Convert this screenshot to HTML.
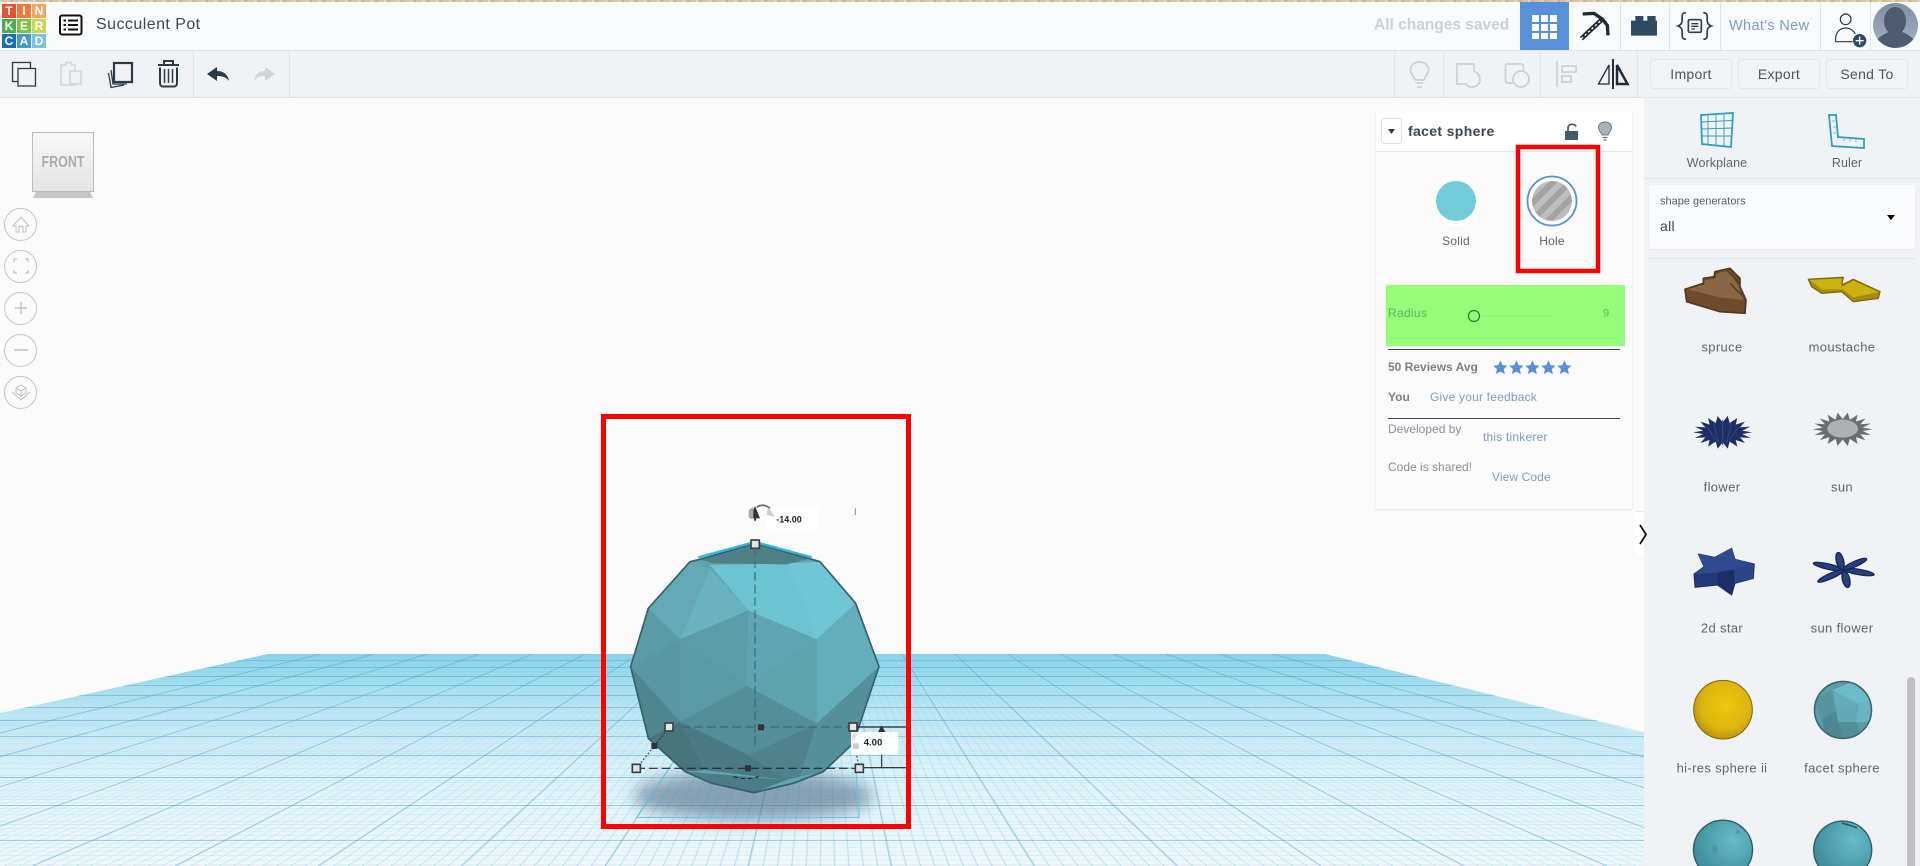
<!DOCTYPE html>
<html lang="en"><head><meta charset="utf-8"><title>Succulent Pot</title>
<style>
html,body{margin:0;padding:0;width:1920px;height:866px;overflow:hidden;background:#fbfbfb;font-family:"Liberation Sans",sans-serif}
#page{position:relative;width:1920px;height:866px;overflow:hidden}
.a{position:absolute}
.t{position:absolute;white-space:nowrap;line-height:1;transform:translateY(-50%)}
.c{position:absolute;white-space:nowrap;line-height:1;transform:translate(-50%,-50%)}
svg{position:absolute;left:0;top:0;overflow:hidden}
.btn{position:absolute;top:59px;height:30px;width:82px;box-sizing:border-box;border:1px solid #e4e6e9;border-radius:3px;background:#f2f3f5;font-size:14px;color:#4a5561;text-align:center;line-height:29px;letter-spacing:.3px}
.v{position:absolute;width:1px;background:#e2e4e8}
.round{position:absolute;left:4px;width:33px;height:33px;border:1px solid #c4c6c9;border-radius:50%;box-sizing:border-box;background:#fbfbfb}
.lbl{font-size:13px;color:#5b6570;letter-spacing:.35px}
.lnk{color:#7d9cc9}
.gry{color:#8a8f96}
</style></head><body><div id="page">

<!-- viewport with grid -->
<div class="a" style="left:0;top:0;width:1644px;height:866px;overflow:hidden;background:#fbfbfb">
  <div class="a" style="left:0;top:0;width:4000px;height:2528px;transform-origin:0 0;transform:matrix3d(.26425,0,0,0, -.2058,-.1322,0,-.0002495, 0,0,1,0, 268,654,0,1);background-color:#eef8fb;background-image:linear-gradient(to right,#c0e5f1 2px,transparent 2px),linear-gradient(to bottom,#c0e5f1 2px,transparent 2px);background-size:20px 20px,20px 20px"></div>
  <svg width="1644" height="866">
    <defs><linearGradient id="gf" x1="0" y1="654" x2="0" y2="866" gradientUnits="userSpaceOnUse">
      <stop offset="0" stop-color="#77cbe8" stop-opacity=".85"/><stop offset=".3" stop-color="#8ad4ec" stop-opacity=".45"/><stop offset=".65" stop-color="#b0e2f2" stop-opacity=".18"/><stop offset="1" stop-color="#d0eef7" stop-opacity="0"/></linearGradient>
      <clipPath id="gc"><polygon points="268,654 1325,654 1644,732 1644,866 0,866 0,713"/></clipPath></defs>
    <polygon points="268,654 1325,654 1644,732 1644,866 0,866 0,713" fill="url(#gf)"/>
    <g clip-path="url(#gc)" stroke="#4f9bb8" stroke-opacity=".42" stroke-width="1" fill="none">
      <path d="M0 660.500H1644M0 667.500H1644M0 676.500H1644M0 685.500H1644M0 695.500H1644M0 707.500H1644M0 720.500H1644M0 736.500H1644M0 755.500H1644M0 777.500H1644M0 805.500H1644M0 840.500H1644"/>
      <path d="M321 654L-541 866M374 654L-398 866M427 654L-255 866M479 654L-111 866M532 654L32 866M585 654L175 866M638 654L318 866M691 654L461 866M744 654L605 866M797 654L748 866M849 654L891 866M902 654L1034 866M955 654L1177 866M1008 654L1321 866M1061 654L1464 866M1114 654L1607 866M1166 654L1750 866M1219 654L1893 866M1272 654L2037 866"/>
    </g>
  </svg>
</div>

<!-- 3D object (crop coords) -->
<svg width="1920" height="866">
 <defs>
  <filter id="bl" x="-30%" y="-80%" width="160%" height="260%"><feGaussianBlur stdDeviation="24"/></filter>
  <clipPath id="sph"><polygon points="330,478 300,485 175,625 122,800 175,1015 285,1115 365,1150 492,1178 610,1150 700,1115 790,1030 867,800 797,610 690,485 655,475 495,430"/></clipPath>
 </defs>
 <g transform="translate(590 400) scale(.33333)">
  <ellipse cx="490" cy="1188" rx="360" ry="76" fill="#4f6f8a" opacity=".62" filter="url(#bl)"/>
  <polygon points="250,1085 140,1252 808,1252 797,1105" fill="none" stroke="#62c1e0" stroke-width="3"/>
  <g clip-path="url(#sph)">
   <rect x="100" y="420" width="800" height="780" fill="#5fa4b0"/>
   <polygon fill="#64a9b5" points="300,485 175,625 270,718 360,505"/>
   <polygon fill="#68b3bf" points="360,505 270,718 475,632"/>
   <polygon fill="#6cc3d2" points="360,495 475,632 680,718 797,610 590,490"/>
   <polygon fill="#6fc6d4" points="590,490 690,485 797,610 680,718 640,600"/>
   <polygon fill="#5a9ca8" points="270,718 475,632 470,858"/>
   <polygon fill="#5ea5b1" points="475,632 680,718 470,858"/>
   <polygon fill="#62aeba" points="680,718 797,610 867,800 680,970"/>
   <polygon fill="#5b9ba6" points="175,625 270,718 122,800"/>
   <polygon fill="#5896a1" points="122,800 270,718 270,965"/>
   <polygon fill="#5a9aa5" points="470,858 270,718 270,965"/>
   <polygon fill="#5da2ad" points="470,858 680,718 680,970"/>
   <polygon fill="#548e99" points="270,965 470,858 680,970 475,1065"/>
   <polygon fill="#4f858f" points="122,800 270,965 175,1015"/>
   <polygon fill="#47757e" points="175,1015 270,965 345,1110 285,1115"/>
   <polygon fill="#4a7a84" points="270,965 475,1065 590,1140 345,1110"/>
   <polygon fill="#4f828c" points="475,1065 680,970 630,1130 590,1140"/>
   <polygon fill="#558f9a" points="680,970 867,800 790,1030 700,1115 630,1130"/>
   <polygon fill="#4b7d86" points="285,1115 590,1140 492,1178 365,1150"/>
   <polygon fill="#4f7f87" points="330,478 495,432 660,475 590,493 370,490"/>
  </g>
  <polygon points="330,478 300,485 175,625 122,800 175,1015 285,1115 365,1150 492,1178 610,1150 700,1115 790,1030 867,800 797,610 690,485 655,475 495,430" fill="none" stroke="#35606c" stroke-width="5" stroke-linejoin="round"/>
  <polyline points="325,472 495,426 665,472" fill="none" stroke="#2fb6da" stroke-width="7"/>
  <!-- selection -->
  <line x1="495" y1="440" x2="495" y2="1040" stroke="#3b6b75" stroke-width="3.500" stroke-dasharray="26 12"/>
  <line x1="237" y1="981" x2="789" y2="981" stroke="#3b6b75" stroke-width="3.500" stroke-dasharray="26 12"/>
  <line x1="139" y1="1105" x2="808" y2="1105" stroke="#1c2a30" stroke-width="3.500" stroke-dasharray="26 12"/>
  <polyline points="139,1105 193,1038 237,981" fill="none" stroke="#1c2a30" stroke-width="3" stroke-dasharray="5 6"/>
  <polyline points="808,1105 795,1040 789,981" fill="none" stroke="#1c2a30" stroke-width="3" stroke-dasharray="5 6"/>
  <path d="M430 1130 Q468 1142 506 1130" fill="none" stroke="#1c2a30" stroke-width="3" stroke-dasharray="14 8"/>
  <line x1="800" y1="981" x2="948" y2="981" stroke="#222" stroke-width="3.500"/>
  <line x1="820" y1="1103" x2="948" y2="1103" stroke="#222" stroke-width="3.500"/>
  <line x1="875" y1="995" x2="875" y2="1103" stroke="#333" stroke-width="3.500"/>
  <polygon points="864,996 886,996 875,976" fill="#333"/>
  <rect x="783" y="996" width="142" height="68" fill="#fff" opacity=".93"/>
  <rect x="789" y="1030" width="17" height="17" fill="#ccc"/>
  <polygon points="787,1000 805,1000 787,1025" fill="#ddd"/>
  <rect x="525" y="322" width="160" height="70" fill="#fff"/>
  <line x1="796" y1="325" x2="796" y2="345" stroke="#888" stroke-width="3"/>
  <polygon points="495,318 510,355 480,355" fill="#333"/>
  <rect x="492" y="350" width="6" height="12" fill="#333"/>
  <path d="M500 322 Q520 308 540 325" fill="none" stroke="#666" stroke-width="5"/>
  <polygon points="534,322 555,350 530,345" fill="#ccc"/>
  <polygon points="476,330 490,320 490,355 476,352" fill="#aaa"/>
  <g fill="#e4e4e4" stroke="#3c3f42" stroke-width="5">
   <rect x="483" y="420" width="25" height="25"/><rect x="225" y="969" width="24" height="24"/><rect x="777" y="969" width="24" height="24"/><rect x="127" y="1093" width="24" height="24"/><rect x="796" y="1093" width="24" height="24"/>
  </g>
  <g fill="#333"><rect x="504" y="973" width="18" height="18"/><rect x="465" y="1096" width="18" height="18"/><rect x="184" y="1029" width="18" height="18"/></g>
 </g>
</svg>
<span class="c" style="left:789px;top:519.500px;font-size:9px;font-weight:bold;color:#222">-14.00</span>
<span class="c" style="left:873px;top:743px;font-size:9.500px;font-weight:bold;color:#222">4.00</span>
<!-- red rectangle -->
<div class="a" style="left:601px;top:414px;width:310px;height:415px;box-sizing:border-box;border:5px solid #fe0000"></div>

<!-- view cube -->
<div class="a" style="left:32px;top:132px;width:62px;height:60px;box-sizing:border-box;border:1px solid #b9bbbd;background:linear-gradient(#f8f8f8,#e4e4e4)"></div>
<div class="a" style="left:33px;top:192px;width:60px;height:6px;background:#c6c6c6;clip-path:polygon(3px 0,57px 0,100% 100%,0 100%)"></div>
<span class="c" style="left:63px;top:163px;font-size:16px;font-weight:bold;color:#a8acb2;transform:translate(-50%,-50%) scaleX(.78)">FRONT</span>
<div class="round" style="top:208px"></div><div class="round" style="top:250px"></div><div class="round" style="top:292px"></div><div class="round" style="top:334px"></div><div class="round" style="top:376px"></div>
<svg width="60" height="420" fill="none" stroke="#bcbfc3" stroke-width="1">
 <path d="M13 226 L21 217 L29 226 L26 226 L26 232 L23 232 L23 226.500 L19 226.500 L19 232 L16 232 L16 226 Z"/>
 <path d="M14 262V259H17M25 259H28V262M14 270V273H17M25 273H28V270" stroke-width="1.200"/>
 <path d="M21 302V314M15 308H27" stroke-width="1.400"/>
 <path d="M14 350H28" stroke-width="1.400"/>
 <path d="M21 385L26 388V393L21 396L16 393V388ZM16 388L21 391L26 388M21 391V396M12 392L21 400L30 392"/>
</svg>

<!-- header -->
<div class="a" style="left:0;top:2px;width:1920px;height:48px;background:#f9fafb;border-bottom:1px solid #e2e4e7;box-sizing:content-box"></div>
<div class="a" style="left:0;top:0;width:1920px;height:2px;background:repeating-linear-gradient(90deg,#d9c3a0 0,#d9c3a0 7px,#e8dcc8 7px,#c7a97e 13px)"></div>
<!-- logo -->
<div class="a" style="left:2px;top:4px;width:44px;height:44px;display:grid;grid-template-columns:repeat(3,14px);grid-template-rows:repeat(3,14px);gap:1px;font:bold 12px/14px 'Liberation Sans',sans-serif;color:#fff;text-align:center">
<span style="background:#e8502f">T</span><span style="background:#f07a3a">I</span><span style="background:#f5a45f">N</span>
<span style="background:#4cac52">K</span><span style="background:#7fc241">E</span><span style="background:#c5d84f">R</span>
<span style="background:#1a6eb5">C</span><span style="background:#3f9bd1">A</span><span style="background:#7cc0e3">D</span></div>
<svg width="1920" height="100">
 <rect x="60" y="15.500" width="21.500" height="19" rx="2" fill="#fff" stroke="#111" stroke-width="2"/>
 <path d="M63.500 20.500h2.500M63.500 25h2.500M63.500 29.500h2.500M68 20.500h10M68 25h10M68 29.500h10" stroke="#111" stroke-width="2"/>
</svg>
<span class="t" style="left:96px;top:25px;font-size:16px;color:#3d4854;letter-spacing:.45px">Succulent Pot</span>
<span class="t" style="left:1374px;top:24.500px;font-size:15.500px;font-weight:bold;color:#cbd0d7">All changes saved</span>
<div class="a" style="left:1520px;top:2px;width:49px;height:48px;background:#5891d9"></div>
<svg width="1920" height="100">
 <g fill="#fff"><rect x="1532" y="15" width="7" height="7"/><rect x="1541" y="15" width="7" height="7"/><rect x="1550" y="15" width="7" height="7"/><rect x="1532" y="24" width="7" height="7"/><rect x="1541" y="24" width="7" height="7"/><rect x="1550" y="24" width="7" height="7"/><rect x="1532" y="33" width="7" height="6"/><rect x="1541" y="33" width="7" height="6"/><rect x="1550" y="33" width="7" height="6"/></g>
 <g transform="translate(1560 0) scale(.33333)">
  <path d="M68 42 L102 40 L128 58 L142 76 L144 106" fill="none" stroke="#1e2a35" stroke-width="10"/>
  <path d="M64 116 L124 60" stroke="#1e2a35" stroke-width="14" fill="none"/>
  <path d="M64 116 L124 60" stroke="#fff" stroke-width="4" stroke-dasharray="7 7" fill="none"/>
  <path d="M213 107V62H226V48H250V62H262V48H287V62H291V107Z" fill="#2f4a63"/>
  <path d="M378 38C362 38 368 50 366 65C365 72 360 76 354 78C360 80 365 84 366 90C368 105 362 118 378 118M430 38C446 38 440 50 442 65C443 72 448 76 454 78C448 80 443 84 442 90C440 105 446 118 430 118" fill="none" stroke="#2d3e50" stroke-width="5"/>
  <rect x="385" y="59" width="39" height="38" rx="4" fill="none" stroke="#2d3e50" stroke-width="5"/>
  <path d="M394 71H415M394 79H415M394 87H405" stroke="#2d3e50" stroke-width="4"/>
  <circle cx="857" cy="58" r="16" fill="none" stroke="#2d3640" stroke-width="3.500"/>
  <path d="M827 125C825 95 840 84 858 84C868 84 880 90 886 102M827 125H878" fill="none" stroke="#2d3640" stroke-width="3.500"/>
  <circle cx="899" cy="122" r="20" fill="#2f4a63"/><path d="M899 110V134M887 122H911" stroke="#fff" stroke-width="4"/>
 </g>
 <defs><clipPath id="av"><ellipse cx="1895.500" cy="25.500" rx="22.500" ry="22.500"/></clipPath>
 <linearGradient id="avg" x1="0" y1="0" x2="0" y2="1"><stop offset="0" stop-color="#7f8fa3"/><stop offset="1" stop-color="#a3b1c3"/></linearGradient></defs>
 <g clip-path="url(#av)"><rect x="1873" y="3" width="45" height="45" fill="url(#avg)"/>
  <ellipse cx="1895" cy="21" rx="11" ry="14" fill="#4d5c70"/><path d="M1873 48C1876 36 1886 34 1890 31H1901C1905 34 1915 36 1918 48Z" fill="#4d5c70"/></g>
</svg>
<div class="v" style="left:1620px;top:2px;height:48px"></div><div class="v" style="left:1669px;top:2px;height:48px"></div><div class="v" style="left:1720px;top:2px;height:48px"></div><div class="v" style="left:1820px;top:2px;height:48px"></div><div class="v" style="left:1870px;top:2px;height:48px"></div>
<span class="t" style="left:1729px;top:26px;font-size:14.500px;color:#7d9cc9;letter-spacing:.35px">What's New</span>

<!-- toolbar -->
<div class="a" style="left:0;top:51px;width:1920px;height:47px;background:#f1f2f5;border-bottom:1px solid #e4e5e8;box-sizing:border-box"></div>
<div class="v" style="left:193px;top:51px;height:47px"></div><div class="v" style="left:289px;top:51px;height:47px"></div>
<div class="v" style="left:1394px;top:51px;height:47px"></div><div class="v" style="left:1443px;top:51px;height:47px"></div><div class="v" style="left:1540px;top:51px;height:47px"></div><div class="v" style="left:1637px;top:51px;height:47px"></div>
<div class="btn" style="left:1650px">Import</div><div class="btn" style="left:1738px">Export</div><div class="btn" style="left:1826px">Send To</div>
<svg width="1920" height="100">
 <!-- copy -->
 <rect x="12.500" y="62.500" width="18" height="19" fill="none" stroke="#2c3a46" stroke-width="1.300"/>
 <rect x="18" y="68.500" width="17.500" height="17.500" fill="#f1f2f5" stroke="#2c3a46" stroke-width="1.300"/>
 <!-- paste -->
 <path d="M61 65H66V62.500H71V65H75V85H61Z" fill="none" stroke="#ced5dd" stroke-width="1.500"/>
 <rect x="70" y="71" width="11" height="13" fill="#f1f2f5" stroke="#ced5dd" stroke-width="1.500"/>
 <!-- duplicate -->
 <path d="M108.500 73L111 87.500L124 85" fill="none" stroke="#2c3a46" stroke-width="1.300"/>
 <path d="M111 70L113 84L127 84" fill="none" stroke="#2c3a46" stroke-width="1.300"/>
 <rect x="114" y="63" width="18" height="19" fill="#f1f2f5" stroke="#2c3a46" stroke-width="2.200"/>
 <!-- trash -->
 <path d="M158 65H179M164 64.500V61H173V64.500" fill="none" stroke="#2c3a46" stroke-width="2"/>
 <path d="M160 67.500V83C160 85.500 161.500 86.500 163 86.500H174C175.500 86.500 177 85.500 177 83V67.500" fill="none" stroke="#2c3a46" stroke-width="2"/>
 <path d="M164.500 69V83M168.500 69V83M172.500 69V83" stroke="#2c3a46" stroke-width="1.500"/>
 <!-- undo / redo -->
 <path d="M207 74L217 67V71C224 71 228 75 229 81C226 77 222 76 217 76V81Z" fill="#2c3a46"/>
 <path d="M275 74L265 67V71C258 71 255 75 254 81C257 77 260 76 265 76V81Z" fill="#cfd6de"/>
 <!-- bulb -->
 <path d="M1415 80C1414 76 1410.500 74 1410.500 70C1410.500 65 1414.500 62 1419.500 62C1424.500 62 1428.500 65 1428.500 70C1428.500 74 1425 76 1424 80ZM1415.500 83H1423.500M1417 87H1422" fill="none" stroke="#ccd2d9" stroke-width="1.800"/>
 <!-- shape -->
 <path d="M1457 64H1474V71C1478 73 1480 76 1480 80C1480 84 1476 87 1472 87C1469 87 1467 86 1466 84H1457Z" fill="none" stroke="#ccd2d9" stroke-width="1.800"/>
 <rect x="1505.500" y="64" width="18" height="19" rx="2" fill="none" stroke="#ccd2d9" stroke-width="1.800"/>
 <circle cx="1521" cy="79" r="8" fill="#f1f2f5" stroke="#ccd2d9" stroke-width="1.800"/>
 <!-- align -->
 <path d="M1557 61V87" stroke="#ccd2d9" stroke-width="1.800"/>
 <rect x="1562" y="66" width="14" height="6" fill="none" stroke="#ccd2d9" stroke-width="1.800"/>
 <rect x="1562" y="76" width="9" height="6" fill="none" stroke="#ccd2d9" stroke-width="1.800"/>
 <!-- flip -->
 <path d="M1613 59V89" stroke="#222c36" stroke-width="2"/>
 <path d="M1609 65V84H1598.500Z" fill="none" stroke="#222c36" stroke-width="1.300"/>
 <path d="M1617 65V84H1627.500Z" fill="none" stroke="#222c36" stroke-width="2.500"/>
</svg>

<!-- inspector -->
<div class="a" style="left:1376px;top:111px;width:256px;height:398px;background:#fbfbfc;box-shadow:0 1px 2px rgba(0,0,0,.1)"></div>
<div class="a" style="left:1376px;top:111px;width:256px;height:40px;background:#fff;border-bottom:1px solid #e2e4e7"></div>
<div class="a" style="left:1381px;top:118px;width:21px;height:26px;box-sizing:border-box;border:1px solid #dfe1e5;border-radius:3px;background:#fff"></div>
<span class="t" style="left:1408px;top:131px;font-size:14px;font-weight:bold;color:#3a4654;letter-spacing:.35px">facet sphere</span>
<div class="a" style="left:1436px;top:181px;width:40px;height:40px;border-radius:50%;background:#72cbd9;box-shadow:0 0 0 5px #fff"></div>
<div class="a" style="left:1386px;top:285px;width:239px;height:61px;background:#94fd7a"></div>
<svg width="1920" height="500">
 <defs><pattern id="st" width="12" height="12" patternUnits="userSpaceOnUse" patternTransform="rotate(-45)"><rect width="12" height="12" fill="#bdbdbd"/><rect width="12" height="6" fill="#a3a3a3"/></pattern></defs>
 <polygon points="1388,129 1395,129 1391.500,134" fill="#333c46"/>
 <rect x="1565" y="131" width="13" height="9" fill="#47596b"/>
 <path d="M1568 131V127.500C1568 124 1574.500 123 1576 126.500" fill="none" stroke="#47596b" stroke-width="1.700"/>
 <path d="M1602 135C1601 132 1598.500 130.500 1598.500 127.500C1598.500 124 1601.500 122 1605 122C1608.500 122 1611.500 124 1611.500 127.500C1611.500 130.500 1609 132 1608 135Z" fill="#a9b2ba" stroke="#6a7681"/>
 <path d="M1602.500 137.500H1607.500M1603.500 140H1606.500" stroke="#6a7681" stroke-width="1.300"/>
 <circle cx="1552" cy="201" r="24.500" fill="#fff" stroke="#5c8fd0" stroke-width="1.800"/>
 <circle cx="1552" cy="201" r="20" fill="url(#st)"/>
 <rect x="1518" y="147" width="80" height="124" fill="none" stroke="#fe0000" stroke-width="4.500"/>
 <line x1="1482" y1="316" x2="1555" y2="316" stroke="#8cf472" stroke-width="1"/>
 <circle cx="1474" cy="316" r="5.500" fill="none" stroke="#2c7a30" stroke-width="1.200"/>
 <line x1="1388" y1="338" x2="1620" y2="338" stroke="#8cf472" stroke-width="1"/>
 <line x1="1388" y1="349.500" x2="1620" y2="349.500" stroke="#3f4a58"/>
 <line x1="1388" y1="418.500" x2="1620" y2="418.500" stroke="#3f4a58"/>
 <g fill="#5891d9" transform="translate(1493 360) scale(.92)"><path d="M8 .5L10.300 5.600L15.800 6.200L11.700 9.900L12.900 15.400L8 12.600L3.100 15.400L4.300 9.900L.2 6.200L5.700 5.600Z"/><path transform="translate(17.400 0)" d="M8 .5L10.300 5.600L15.800 6.200L11.700 9.900L12.900 15.400L8 12.600L3.100 15.400L4.300 9.900L.2 6.200L5.700 5.600Z"/><path transform="translate(34.800 0)" d="M8 .5L10.300 5.600L15.800 6.200L11.700 9.900L12.900 15.400L8 12.600L3.100 15.400L4.300 9.900L.2 6.200L5.700 5.600Z"/><path transform="translate(52.200 0)" d="M8 .5L10.300 5.600L15.800 6.200L11.700 9.900L12.900 15.400L8 12.600L3.100 15.400L4.300 9.900L.2 6.200L5.700 5.600Z"/><path transform="translate(69.600 0)" d="M8 .5L10.300 5.600L15.800 6.200L11.700 9.900L12.900 15.400L8 12.600L3.100 15.400L4.300 9.900L.2 6.200L5.700 5.600Z"/></g>
</svg>
<span class="c lbl" style="left:1456px;top:241px;font-size:12px;letter-spacing:.2px">Solid</span>
<span class="c lbl" style="left:1552px;top:241px;font-size:12px;letter-spacing:.2px">Hole</span>
<span class="t" style="left:1388px;top:313px;font-size:12px;color:#5cb84f;letter-spacing:.3px">Radius</span>
<span class="t" style="left:1603px;top:314px;font-size:11px;color:#5cb84f">9</span>
<span class="t" style="left:1388px;top:367px;font-size:12px;font-weight:bold;color:#7c8187">50 Reviews Avg</span>
<span class="t" style="left:1388px;top:397px;font-size:12px;font-weight:bold;color:#7c8187">You</span>
<span class="t lnk" style="left:1430px;top:397px;font-size:12px;letter-spacing:.2px">Give your feedback</span>
<span class="t gry" style="left:1388px;top:429px;font-size:12px">Developed by</span>
<span class="t lnk" style="left:1483px;top:437px;font-size:12px;letter-spacing:.2px">this tinkerer</span>
<span class="t gry" style="left:1388px;top:467px;font-size:12px">Code is shared!</span>
<span class="t lnk" style="left:1492px;top:477px;font-size:12px;letter-spacing:.1px">View Code</span>

<!-- toggle -->
<div class="a" style="left:1635px;top:511px;width:15px;height:46px;background:#fff;border-top:1px solid #e4e5e8;box-sizing:border-box"></div>

<!-- sidebar -->
<div class="a" style="left:1644px;top:98px;width:276px;height:768px;background:#f1f2f5"></div>
<div class="a" style="left:1644px;top:178px;width:276px;height:1px;background:#e2e4e7"></div>
<div class="a" style="left:1649px;top:185px;width:266px;height:64px;background:#fafbfc;border-radius:2px;box-shadow:0 1px 1px rgba(0,0,0,.05)"></div>
<div class="a" style="left:1648px;top:258px;width:267px;height:1px;background:#e2e4e7"></div>
<div class="a" style="left:1907px;top:677px;width:8px;height:189px;background:#bfbfbf;border-radius:4px 4px 0 0"></div>
<span class="c lbl" style="left:1717px;top:163px;font-size:12.500px;letter-spacing:.1px">Workplane</span>
<span class="c lbl" style="left:1847px;top:163px;font-size:12.500px;letter-spacing:.1px">Ruler</span>
<span class="t" style="left:1660px;top:202px;font-size:11px;color:#555e68">shape generators</span>
<span class="t" style="left:1660px;top:226px;font-size:14px;color:#3e4852;letter-spacing:.3px">all</span>
<span class="c lbl" style="left:1722px;top:347px">spruce</span>
<span class="c lbl" style="left:1842px;top:347px">moustache</span>
<span class="c lbl" style="left:1722px;top:487px">flower</span>
<span class="c lbl" style="left:1842px;top:487px">sun</span>
<span class="c lbl" style="left:1722px;top:628px">2d star</span>
<span class="c lbl" style="left:1842px;top:628px">sun flower</span>
<span class="c lbl" style="left:1722px;top:768px">hi-res sphere ii</span>
<span class="c lbl" style="left:1842px;top:768px">facet sphere</span>

<svg width="1920" height="866">
 <defs>
  <radialGradient id="yl" cx=".55" cy=".42" r=".6"><stop offset="0" stop-color="#ecc90f"/><stop offset=".7" stop-color="#dbb40f"/><stop offset="1" stop-color="#b8930c"/></radialGradient>
  <radialGradient id="tl" cx="1733" cy="840" r="38" gradientUnits="userSpaceOnUse"><stop offset="0" stop-color="#66bcc9"/><stop offset="1" stop-color="#42909d"/></radialGradient>
  <radialGradient id="tl2" cx="1853" cy="840" r="38" gradientUnits="userSpaceOnUse"><stop offset="0" stop-color="#66bcc9"/><stop offset="1" stop-color="#42909d"/></radialGradient>
  <clipPath id="fc"><circle cx="1843" cy="710" r="29"/></clipPath>
 </defs>
 <path d="M1640 525L1646 534.500L1640 544" fill="none" stroke="#111" stroke-width="1.800"/>
 <!-- workplane icon -->
 <g fill="none" stroke="#2f9fc4">
  <polygon points="1701,115 1733,113 1731,147 1702,144" stroke-width="1.800"/>
  <path d="M1708 115V145M1716 114.500V146M1724 114V146.500M1701.500 122L1732.500 120.500M1701.500 129L1732 128M1702 136L1731.500 136" stroke-width=".9"/>
 </g>
 <!-- ruler -->
 <path d="M1829 115L1836 115L1838 137L1864 139V148L1832 146Z" fill="none" stroke="#2f9fc4" stroke-width="1.800"/>
 <path d="M1832 121h3M1833 127h3M1833 133h3M1844 138v3M1850 138.500v3M1856 139v3" stroke="#7fbcd0" stroke-width="1"/>
 <polygon points="1887,215 1895,215 1891,220" fill="#000"/>

 <g transform="translate(1640 250) scale(.33333)">
  <!-- spruce -->
  <polygon points="135,118 190,100 190,85 222,80 225,65 270,55 300,85 300,110 318,150 315,190 240,185 140,155" fill="#6e4b2c" stroke="#55381f" stroke-width="5" stroke-linejoin="round"/>
  <polygon points="142,118 192,104 195,90 226,86 230,70 268,62 296,110 310,150 240,142" fill="#8a6744"/>
  <path d="M270 100L305 135M262 62L298 100" stroke="#55381f" stroke-width="4" fill="none"/>
  <!-- moustache -->
  <polygon points="505,88 610,82 605,105 640,88 720,125 715,145 640,155 605,125 545,130 515,110" fill="#a48d10" stroke="#7d6c0c" stroke-width="4" stroke-linejoin="round"/>
  <polygon points="510,90 606,85 603,112 640,92 716,126 640,142 608,118 545,118" fill="#cdb113"/>
  <!-- flower -->
  <polygon fill="#1e2f65" points="336,547 307,552 331,564 300,562 315,579 287,570 292,590 269,575 263,596 248,577 233,596 227,575 204,590 209,570 181,579 196,562 165,564 189,552 160,547 189,542 165,530 196,532 181,515 209,524 204,504 227,519 233,498 248,517 263,498 269,519 292,504 287,524 315,515 300,532 331,530 307,542"/>
  <path d="M248 510V585M222 520L235 578M274 520L261 578M200 530L228 570M296 530L268 570" stroke="#33477f" stroke-width="3"/>
  <!-- sun -->
  <polygon transform="translate(608 538) scale(1.02) translate(-248 -547)" fill="#6b6d70" points="336,547 307,552 331,564 300,562 315,579 287,570 292,590 269,575 263,596 248,577 233,596 227,575 204,590 209,570 181,579 196,562 165,564 189,552 160,547 189,542 165,530 196,532 181,515 209,524 204,504 227,519 233,498 248,517 263,498 269,519 292,504 287,524 315,515 300,532 331,530 307,542"/>
  <ellipse cx="608" cy="536" rx="46" ry="27" fill="#aeb0b2"/>
 </g>
 <g transform="translate(1640 550) scale(.33333)">
  <!-- star -->
  <polygon points="175,12 225,22 275,-5 285,28 343,42 340,85 285,100 275,135 232,105 165,112 162,72 192,50" fill="#233a78" stroke="#1b2d5e" stroke-width="3" stroke-linejoin="round"/>
  <polygon points="175,12 225,22 275,-5 285,28 343,42 282,58 232,68 162,72 192,50" fill="#2f4a90"/>
  <polygon points="282,58 343,42 340,85 285,100" fill="#2a4488"/>
  <polygon points="232,68 282,58 285,100 275,135 232,105" fill="#1c2e68"/>
  <!-- sunflower -->
  <g fill="#25407f" stroke="#17264f" stroke-width="4">
   <ellipse cx="565" cy="50" rx="46" ry="8" transform="rotate(13 565 50)"/>
   <ellipse cx="657" cy="66" rx="46" ry="8" transform="rotate(10 657 66)"/>
   <ellipse cx="572" cy="78" rx="42" ry="8" transform="rotate(-24 572 78)"/>
   <ellipse cx="645" cy="42" rx="38" ry="8" transform="rotate(-24 645 42)"/>
   <ellipse cx="600" cy="33" rx="11" ry="26" transform="rotate(-14 600 33)"/>
   <ellipse cx="618" cy="88" rx="11" ry="25" transform="rotate(-14 618 88)"/>
  </g>
  <!-- hi-res -->
  <circle cx="249" cy="479" r="88" fill="url(#yl)" stroke="#7d6609" stroke-width="3"/>
 </g>
 <!-- cut-off spheres at the frame edge -->
 <path d="M1698.400 866A29.500 29.500 0 1 1 1747.600 866" fill="url(#tl)" stroke="#2c5f6a" stroke-width="1.400"/>
 <path d="M1818.500 866A29 29 0 1 1 1866.900 866" fill="url(#tl2)" stroke="#2c5f6a" stroke-width="1.400"/>
 <path d="M1842 823L1852 826L1857 828" fill="none" stroke="#2c5f6a" stroke-width="1.700"/>
 <ellipse cx="1715" cy="849" rx="2.700" ry="3.700" fill="#4a99a6"/><ellipse cx="1738" cy="832" rx="2.300" ry="1.700" fill="#4d9aa7"/>
 <!-- facet mini -->
 <g clip-path="url(#fc)">
  <rect x="1813" y="680" width="60" height="60" fill="#5a9ca8"/>
  <polygon points="1832,690 1852,682 1873,700 1858,704" fill="#6bbcc9"/>
  <polygon points="1832,690 1858,704 1836,711" fill="#62adb9"/>
  <polygon points="1858,704 1873,700 1873,722 1856,722" fill="#66b5c1"/>
  <polygon points="1836,711 1858,704 1856,722 1838,722" fill="#5fa8b4"/>
  <polygon points="1814,700 1832,690 1836,711 1822,720" fill="#55939f"/>
  <polygon points="1822,720 1836,711 1838,722 1845,740 1825,735" fill="#4f8892"/>
  <polygon points="1838,722 1856,722 1862,738 1845,740" fill="#528d98"/>
 </g>
 <circle cx="1843" cy="710" r="28.500" fill="none" stroke="#37636e" stroke-width="1.500"/>
</svg>
</div></body></html>
